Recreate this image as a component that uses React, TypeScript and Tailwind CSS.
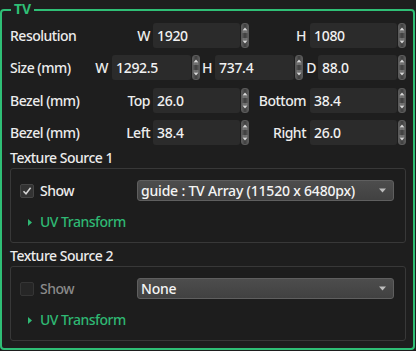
import React from "react";

const font = { fontFamily: '"Noto Sans", "Open Sans", sans-serif' };

function Spinner() {
  return (
    <div className="ml-[1px] flex h-[25px] w-[8px] flex-col items-center justify-between rounded-[3px] border border-[#5a5a5a] bg-gradient-to-r from-[#5c5c5c] via-[#3e3e3e] to-[#5c5c5c] py-[3px]">
      <svg width="6" height="6" viewBox="0 0 6 6">
        <path d="M3 0.5 L5.5 3.5 L0.5 3.5 Z" fill="#d8d8d8" />
        <rect x="0.5" y="4.5" width="5" height="1" fill="#9a9a9a" />
      </svg>
      <svg width="6" height="6" viewBox="0 0 6 6">
        <rect x="0.5" y="0.5" width="5" height="1" fill="#9a9a9a" />
        <path d="M0.5 2.5 L5.5 2.5 L3 5.5 Z" fill="#d8d8d8" />
      </svg>
    </div>
  );
}

function NumField({
  label,
  labelW,
  pr,
  inputW,
  value,
}: {
  label: string;
  labelW: string;
  pr: string;
  inputW: string;
  value: string;
}) {
  return (
    <div className="flex items-center">
      <div className={`${labelW} ${pr} whitespace-nowrap text-right text-[14px] font-medium leading-[18px] tracking-[-0.5px] text-[#ececec]`}>
        {label}
      </div>
      <div
        className={`${inputW} flex h-[25px] items-center rounded-[3px] bg-[#2b2b2b] pl-[4px] text-[14px] font-medium tracking-[-0.3px] text-[#f2f2f2]`}
      >
        {value}
      </div>
      <Spinner />
    </div>
  );
}

function Title({ children, className = "" }: { children: React.ReactNode; className?: string }) {
  return (
    <div className={`h-[18px] whitespace-nowrap text-[14px] font-medium leading-[18px] tracking-[-0.5px] text-[#ececec] ${className}`}>
      {children}
    </div>
  );
}

function TextureBox({ checked, value }: { checked: boolean; value: string }) {
  return (
    <div className="mt-[1px] flex flex-col rounded-[3px] border border-[#383838] bg-[#1d1d1d] pb-[11px] pt-[11px]">
      <div className="flex h-[21px] items-center">
        <div className="flex w-[126px] shrink-0 items-center pl-[9px]">
          <div
            className={`flex h-[14px] w-[14px] items-center justify-center rounded-[2px] border ${
              checked ? "border-[#454545] bg-[#333333]" : "border-[#353535] bg-[#262626]"
            }`}
          >
            {checked && (
              <svg width="10" height="10" viewBox="0 0 10 10">
                <path d="M1.5 5.2 L4 7.8 L8.6 1.8" stroke="#d6d6d6" strokeWidth="1.5" fill="none" />
              </svg>
            )}
          </div>
          <span
            className={`ml-[6px] text-[14px] font-medium leading-[18px] tracking-[-0.5px] ${
              checked ? "text-[#ececec]" : "text-[#8a8a8a]"
            }`}
          >
            Show
          </span>
        </div>
        <div className="mr-[11px] flex h-[21px] flex-1 items-center justify-between rounded-[3px] border border-[#5f5f5f] bg-gradient-to-b from-[#4d4d4d] to-[#414141] pl-[3px] pr-[7px] text-[14px] font-medium tracking-[-0.2px] text-[#f4f4f4]">
          <span>{value}</span>
          <svg width="7" height="5" viewBox="0 0 7 5">
            <path d="M0 0.5 L7 0.5 L3.5 4.5 Z" fill="#bdbdbd" />
          </svg>
        </div>
      </div>
      <div className="mt-[12px] flex h-[18px] items-center pl-[17px]">
        <svg width="4" height="7" viewBox="0 0 4 7">
          <path d="M0 0 L4 3.5 L0 7 Z" fill="#2fb873" />
        </svg>
        <span className="ml-[8px] text-[14px] font-medium leading-[18px] tracking-[-0.5px] text-[#2fb873]">UV Transform</span>
      </div>
    </div>
  );
}

export default function App() {
  return (
    <div className="h-[351px] w-[416px] overflow-hidden bg-[#1e1e1e] pt-[9px]" style={font}>
      <div className="relative h-[341px] w-[415px] rounded-[4px] border-2 border-[#2fbf76] pl-[8px] pr-[7px] pt-[12px]">
        <div className="absolute left-[9px] top-[-11px] bg-[#1e1e1e] px-[3px] text-[14px] font-bold leading-[18px] text-[#2fbf76]">
          TV
        </div>

        <div className="flex h-[25px] items-center">
          <Title className="w-[100px]">Resolution</Title>
          <NumField label="W" labelW="w-[43px]" pr="pr-[3px]" inputW="w-[87px]" value="1920" />
          <NumField label="H" labelW="w-[61px]" pr="pr-[4px]" inputW="w-[87px]" value="1080" />
        </div>

        <div className="mt-[7px] flex h-[25px] items-center">
          <Title className="w-[80px]">Size (mm)</Title>
          <NumField label="W" labelW="w-[22px]" pr="pr-[4px]" inputW="w-[79px]" value="1292.5" />
          <NumField label="H" labelW="w-[15px]" pr="pr-[3px]" inputW="w-[79px]" value="737.4" />
          <NumField label="D" labelW="w-[15px]" pr="pr-[2px]" inputW="w-[79px]" value="88.0" />
        </div>

        <div className="mt-[8px] flex h-[25px] items-center">
          <Title className="w-[100px]">Bezel (mm)</Title>
          <NumField label="Top" labelW="w-[43px]" pr="pr-[3px]" inputW="w-[87px]" value="26.0" />
          <NumField label="Bottom" labelW="w-[61px]" pr="pr-[4px]" inputW="w-[87px]" value="38.4" />
        </div>

        <div className="mt-[7px] flex h-[25px] items-center">
          <Title className="w-[100px]">Bezel (mm)</Title>
          <NumField label="Left" labelW="w-[43px]" pr="pr-[3px]" inputW="w-[87px]" value="38.4" />
          <NumField label="Right" labelW="w-[61px]" pr="pr-[4px]" inputW="w-[87px]" value="26.0" />
        </div>

        <Title className="mt-[4px]">Texture Source 1</Title>
        <TextureBox checked={true} value="guide : TV Array (11520 x 6480px)" />

        <Title className="mt-[4px]">Texture Source 2</Title>
        <TextureBox checked={false} value="None" />
      </div>
    </div>
  );
}
